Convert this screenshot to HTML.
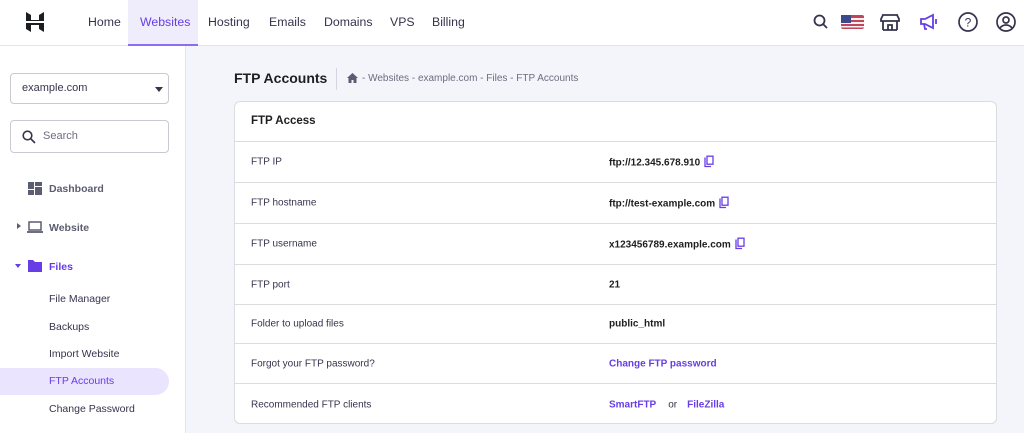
<!DOCTYPE html><html><head><style>
*{margin:0;padding:0;box-sizing:border-box}
body{width:1024px;height:433px;overflow:hidden;font-family:"Liberation Sans",sans-serif;background:#f4f4fb;position:relative;color:#2f1c6a}
.hdr{position:absolute;left:0;top:0;width:1024px;height:46px;background:#fff;border-bottom:1px solid #e3e3ec}
.nav{position:absolute;top:0;height:46px;line-height:44px;font-size:12.3px;color:#36344d}
.act{background:#efecfc;color:#673de6;border-bottom:2px solid #8c6cf0;padding:0 12px;width:70px}
.side{position:absolute;left:0;top:46px;width:186px;height:387px;background:#fff;border-right:1px solid #e3e3ec}
.box{position:absolute;left:10px;width:159px;border:1px solid #c9c9d4;border-radius:4px;background:#fff;font-size:11px;color:#36344d}
.it{position:absolute;font-size:10.5px;color:#36344d}
.b{font-weight:bold}
.card{position:absolute;left:234px;top:101px;width:763px;height:323px;background:#fff;border:1px solid #dadce0;border-radius:6px;overflow:hidden}
.row{position:absolute;left:0;width:763px;border-top:1px solid #dadce0;font-size:10px;color:#36344d}
.row span{position:absolute;top:50%;transform:translateY(-50%)}
.l{left:16px}.v{left:374px;font-weight:bold;color:#1d1e20}
.lk{color:#673de6!important}
.cp{margin-left:4px;vertical-align:-2px}
</style></head><body>
<div class="hdr">
<svg style="position:absolute;left:26px;top:12px" width="18" height="20" viewBox="0 0 18 20"><path d="M0 0l5 3v5h8V3l5-3v9H0zM0 11h18v9l-5-3v-4H5v7l-5-3z" fill="#1d1e20"/></svg>
<div class="nav" style="left:88px">Home</div>
<div class="nav act" style="left:128px">Websites</div>
<div class="nav" style="left:208px">Hosting</div>
<div class="nav" style="left:269px">Emails</div>
<div class="nav" style="left:324px">Domains</div>
<div class="nav" style="left:390px">VPS</div>
<div class="nav" style="left:432px">Billing</div>
<svg style="position:absolute;left:813px;top:14px" width="16" height="16"><circle cx="6.5" cy="6.5" r="5" fill="none" stroke="#36344d" stroke-width="1.8"/><path d="M10 10l4 4" stroke="#36344d" stroke-width="1.8"/></svg>
<svg style="position:absolute;left:841px;top:15px" width="23" height="14"><rect width="23" height="14" rx="2" fill="#c4455a"/><rect y="3" width="23" height="2" fill="#f2f2f2"/><rect y="7" width="23" height="2" fill="#f2f2f2"/><rect y="11" width="23" height="1.5" fill="#f2f2f2"/><rect width="10" height="8" fill="#3b4a8a"/></svg>
<svg style="position:absolute;left:880px;top:13px" width="20" height="18"><path d="M2 2h16M1 6l2-4h14l2 4v2H1zM3 8v9M17 8v9M3 17h14M8 17v-5h4v5" fill="none" stroke="#36344d" stroke-width="1.8"/></svg>
<svg style="position:absolute;left:919px;top:13px" width="20" height="18"><path d="M2 6h4l8-4v13l-8-4H2zM5 11l1 5h2" fill="none" stroke="#673de6" stroke-width="1.8"/><path d="M17 6v5" stroke="#673de6" stroke-width="1.8"/></svg>
<svg style="position:absolute;left:957px;top:11px" width="22" height="22"><circle cx="11" cy="11" r="9" fill="none" stroke="#36344d" stroke-width="1.7"/><text x="11" y="15.5" font-size="12" text-anchor="middle" fill="#36344d" font-family="Liberation Sans">?</text></svg>
<svg style="position:absolute;left:995px;top:11px" width="22" height="22"><circle cx="11" cy="11" r="9" fill="none" stroke="#36344d" stroke-width="1.7"/><circle cx="11" cy="9" r="3" fill="none" stroke="#36344d" stroke-width="1.7"/><path d="M5 17c3-4 9-4 12 0" fill="none" stroke="#36344d" stroke-width="1.7"/></svg>
</div>
<div class="side">
<div class="box" style="top:27px;height:31px;line-height:29px;padding-left:11px">example.com<span style="position:absolute;right:5px;top:13px;border:4px solid transparent;border-top:5px solid #36344d"></span></div>
<div class="box" style="top:74px;height:33px;line-height:31px;padding-left:32px;color:#6d6d80">Search<svg style="position:absolute;left:11px;top:9px" width="14" height="14"><circle cx="5.5" cy="5.5" r="4.3" fill="none" stroke="#36344d" stroke-width="1.6"/><path d="M9 9l4 4" stroke="#36344d" stroke-width="1.6"/></svg></div>
<svg style="position:absolute;left:28px;top:136px" width="14" height="13"><rect width="6" height="7" fill="#5c5d70"/><rect x="7" width="7" height="4" fill="#5c5d70"/><rect y="8" width="6" height="5" fill="#5c5d70"/><rect x="7" y="5" width="7" height="8" fill="#5c5d70"/></svg>
<div class="it b" style="left:49px;top:137px;color:#5c5d70">Dashboard</div>
<div style="position:absolute;left:17px;top:177px;border:3px solid transparent;border-left:4px solid #5c5d70"></div>
<svg style="position:absolute;left:27px;top:175px" width="16" height="13"><rect x="2" y="1" width="12" height="8" fill="none" stroke="#5c5d70" stroke-width="1.5"/><path d="M0 11h16" stroke="#5c5d70" stroke-width="1.8"/></svg>
<div class="it b" style="left:49px;top:176px;color:#5c5d70">Website</div>
<div style="position:absolute;left:15px;top:218px;border:3px solid transparent;border-top:4px solid #673de6"></div>
<svg style="position:absolute;left:28px;top:213px" width="14" height="13"><path d="M0 1h5l2 2h7v10H0z" fill="#673de6"/></svg>
<div class="it b" style="left:49px;top:215px;color:#673de6">Files</div>
<div class="it" style="left:49px;top:247px">File Manager</div>
<div class="it" style="left:49px;top:275px">Backups</div>
<div class="it" style="left:49px;top:302px">Import Website</div>
<div style="position:absolute;left:0;top:322px;width:169px;height:27px;background:#ebe4ff;border-radius:0 14px 14px 0"></div>
<div class="it" style="left:49px;top:329px;color:#673de6">FTP Accounts</div>
<div class="it" style="left:49px;top:357px">Change Password</div>
</div>
<div style="position:absolute;left:234px;top:70px;font-size:14px;font-weight:bold;color:#1d1e20">FTP Accounts</div>
<div style="position:absolute;left:336px;top:68px;width:1px;height:22px;background:#d5d5de"></div>
<svg style="position:absolute;left:347px;top:73px" width="11" height="10"><path d="M5.5 0L0 5h1.5v5h3V7h2v3h3V5H11z" fill="#5c5d70"/></svg>
<div style="position:absolute;left:362px;top:73px;font-size:10px;color:#6d6d80">- Websites - example.com - Files - FTP Accounts</div>
<div class="card">
<div style="position:absolute;left:16px;top:13px;font-size:11.5px;font-weight:bold;color:#1d1e20">FTP Access</div>
<div class="row" style="top:39px;height:41px"><span class="l">FTP IP</span><span class="v">ftp://12.345.678.910<svg class="cp" width="10" height="12"><path d="M1 2v9h6" fill="none" stroke="#673de6" stroke-width="1.3"/><rect x="3" y="0.7" width="6" height="8" fill="none" stroke="#673de6" stroke-width="1.3"/></svg></span></div>
<div class="row" style="top:80px;height:41px"><span class="l">FTP hostname</span><span class="v">ftp://test-example.com<svg class="cp" width="10" height="12"><path d="M1 2v9h6" fill="none" stroke="#673de6" stroke-width="1.3"/><rect x="3" y="0.7" width="6" height="8" fill="none" stroke="#673de6" stroke-width="1.3"/></svg></span></div>
<div class="row" style="top:121px;height:41px"><span class="l">FTP username</span><span class="v">x123456789.example.com<svg class="cp" width="10" height="12"><path d="M1 2v9h6" fill="none" stroke="#673de6" stroke-width="1.3"/><rect x="3" y="0.7" width="6" height="8" fill="none" stroke="#673de6" stroke-width="1.3"/></svg></span></div>
<div class="row" style="top:162px;height:40px"><span class="l">FTP port</span><span class="v">21</span></div>
<div class="row" style="top:202px;height:39px"><span class="l">Folder to upload files</span><span class="v">public_html</span></div>
<div class="row" style="top:241px;height:40px"><span class="l">Forgot your FTP password?</span><span class="v lk">Change FTP password</span></div>
<div class="row" style="top:281px;height:42px"><span class="l">Recommended FTP clients</span><span class="v"><b class="lk">SmartFTP</b><b style="font-weight:normal;color:#36344d;margin:0 10px 0 12px">or</b><b class="lk">FileZilla</b></span></div>
</div>
</body></html>
